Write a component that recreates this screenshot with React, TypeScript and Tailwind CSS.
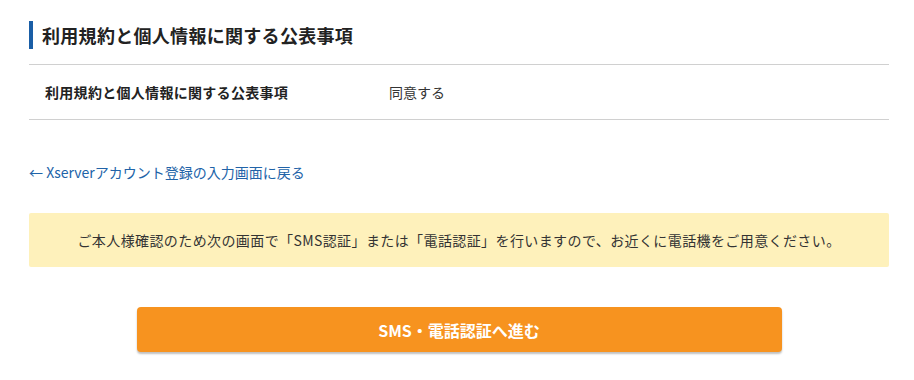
import React from 'react';

const font = '"Noto Sans CJK JP", "Noto Sans", "Liberation Sans", sans-serif';

function App() {
    return (
        <div className="min-h-[380px] bg-white text-[#333]" style={{ fontFamily: font }}>
            <div className="ml-[29px] w-[860px] pt-[21px]">
                <h2 className="flex h-[28px] items-center border-l-4 border-[#1a5ea6] pl-[9px] text-[18px] font-bold leading-none tracking-[0.3px] text-[#222]">
                    利用規約と個人情報に関する公表事項
                </h2>

                <div className="mt-[15px] flex h-[56px] items-center border-y border-[#d0d0d0] px-4 text-[14px]">
                    <div className="w-[344px] font-bold tracking-[0.3px] text-[#222]">利用規約と個人情報に関する公表事項</div>
                    <div className="text-[#333]">同意する</div>
                </div>

                <a href="#" className="mt-[42px] block text-[14px] leading-[20px] text-[#2163a8]">
                    ← Xserverアカウント登録の入力画面に戻る
                </a>

                <div className="mt-[31px] flex h-[54px] items-center justify-center rounded-[2px] bg-[#fef1bb] text-[14px] tracking-[0.4px] text-[#333]">
                    ご本人様確認のため次の画面で「SMS認証」または「電話認証」を行いますので、お近くに電話機をご用意ください。
                </div>

                <div className="mt-[40px] flex justify-center">
                    <button className="flex h-[45px] w-[645px] items-center justify-center rounded-[4px] bg-[#f7931f] text-[16px] font-bold text-white shadow-[0_2px_2px_rgba(0,0,0,0.25)]">
                        SMS・電話認証へ進む
                    </button>
                </div>
            </div>
        </div>
    );
}

export default App;
